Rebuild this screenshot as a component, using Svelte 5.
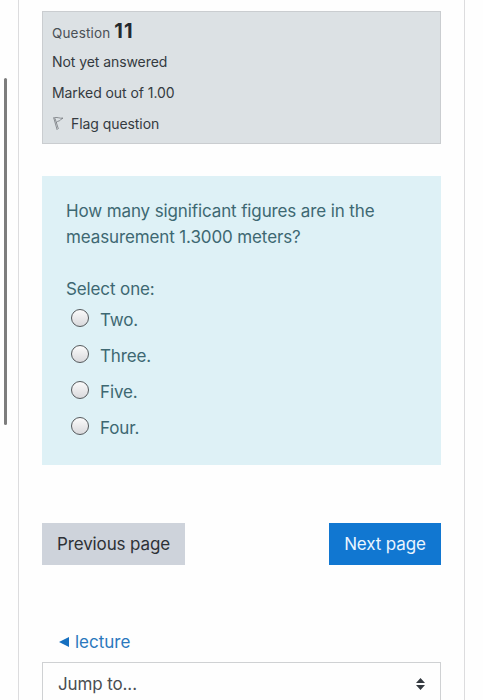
<script>
  const question = {
    number: 11,
    state: 'Not yet answered',
    grade: 'Marked out of 1.00',
    text: 'How many significant figures are in the measurement 1.3000 meters?',
    answers: ['Two.', 'Three.', 'Five.', 'Four.']
  };

  let selected = $state(null);
</script>

<div class="page">
  <div class="scrollbar"></div>

  <main class="region-main">
    <section class="info">
      <h3 class="question-number">Question <span class="qno">{question.number}</span></h3>
      <div class="info-line">{question.state}</div>
      <div class="info-line">{question.grade}</div>
      <div class="info-line flag">
        <svg class="flag-icon" width="12" height="15" viewBox="0 0 12 15">
          <path d="M1.6 1.4 L5.2 14" />
          <path d="M3 2.4 L6.4 13" />
          <path d="M1.8 2 Q4 1 6.2 1.7 T11 2.1 Q8.8 3 7.6 4.8 Q5.6 4.8 4 6.8" />
        </svg>
        <span>Flag question</span>
      </div>
    </section>

    <section class="formulation">
      <p class="qtext">{question.text}</p>
      <div class="prompt">Select one:</div>
      <div class="answers">
        {#each question.answers as answer, i}
          <label class="answer">
            <input type="radio" name="answer" value={i} bind:group={selected} />
            <span>{answer}</span>
          </label>
        {/each}
      </div>
    </section>

    <div class="submit-buttons">
      <button class="btn btn-secondary">Previous page</button>
      <button class="btn btn-primary">Next page</button>
    </div>

    <a class="prev-activity" href="#lecture">
      <svg width="10" height="10" viewBox="0 0 10 10"><path d="M0 5 L10 0 V10 Z" /></svg>
      <span>lecture</span>
    </a>

    <div class="jump">
      <span>Jump to...</span>
      <svg width="9" height="12" viewBox="0 0 9 12"><path d="M4.5 0 L9 5 H0 Z M0 7 H9 L4.5 12 Z" /></svg>
    </div>
  </main>
</div>

<style>
  :global(body) {
    background: #fefefe;
  }

  .page {
    display: flex;
    height: 700px;
    overflow: hidden;
    font-family: Inter, 'Liberation Sans', sans-serif;
    font-size: 17px;
    letter-spacing: -0.12px;
  }

  .scrollbar {
    width: 3px;
    height: 347px;
    margin: 78px 11px 0 4px;
    border-radius: 2px;
    background: #7d7d7d;
    flex-shrink: 0;
  }

  .region-main {
    box-sizing: border-box;
    width: 447px;
    height: 760px;
    padding: 11px 23px 0;
    border: 1px solid #dcdcde;
    border-width: 0 1px;
    background: #fefefe;
    flex-shrink: 0;
  }

  .info {
    box-sizing: border-box;
    height: 133px;
    padding: 4px 9px 0;
    border: 1px solid #cacdd0;
    background: #dce1e4;
    color: #343a40;
    font-size: 14px;
    letter-spacing: -0.07px;
  }

  .question-number {
    margin: 0;
    height: 30px;
    line-height: 31px;
    font-size: 13.5px;
    font-weight: 400;
    letter-spacing: 0.15px;
    color: #4a5056;
  }

  .qno {
    font-size: 20px;
    font-weight: 700;
    letter-spacing: 1.2px;
    color: #24292f;
  }

  .info-line {
    height: 31px;
    line-height: 31px;
  }

  .flag {
    display: flex;
    align-items: center;
    gap: 7px;
  }

  .flag-icon path {
    fill: none;
    stroke: #75797d;
    stroke-width: 0.8;
  }

  .formulation {
    box-sizing: border-box;
    height: 289px;
    margin-top: 32px;
    padding: 22px 24px 0;
    background: #def1f6;
    color: #3d6872;
  }

  .qtext {
    margin: 0 0 26px;
    line-height: 26px;
  }

  .prompt {
    line-height: 26px;
  }

  .answer {
    display: flex;
    align-items: center;
    height: 36px;
  }

  .answers {
    padding-left: 5px;
  }

  input {
    appearance: none;
    box-sizing: border-box;
    width: 18px;
    height: 18px;
    margin: 0 11px 4px 0;
    border: 1px solid #55595c;
    border-radius: 50%;
    background: linear-gradient(#fbfbfb, #d9d9dc);
  }

  input:checked {
    background: radial-gradient(#1177d1 35%, #f0f0f0 40%);
  }

  .submit-buttons {
    display: flex;
    justify-content: space-between;
    margin-top: 58px;
  }

  .btn {
    height: 42px;
    padding: 0;
    border: 0;
    font: inherit;
    letter-spacing: inherit;
  }

  .btn-secondary {
    width: 143px;
    background: #ced3db;
    color: #2d3136;
  }

  .btn-primary {
    width: 112px;
    background: #1177d1;
    color: #e9f5ff;
  }

  .prev-activity {
    display: flex;
    align-items: center;
    gap: 6px;
    height: 26px;
    margin: 64px 0 0 17px;
    color: #2a78bd;
    letter-spacing: 0;
    text-decoration: none;
  }

  .prev-activity path {
    fill: #1670c0;
  }

  .jump {
    box-sizing: border-box;
    display: flex;
    align-items: center;
    justify-content: space-between;
    height: 43px;
    margin-top: 7px;
    padding: 0 15px;
    border: 1px solid #cfd1d3;
    color: #4a4e52;
  }

  .jump path {
    fill: #343a40;
  }
</style>
